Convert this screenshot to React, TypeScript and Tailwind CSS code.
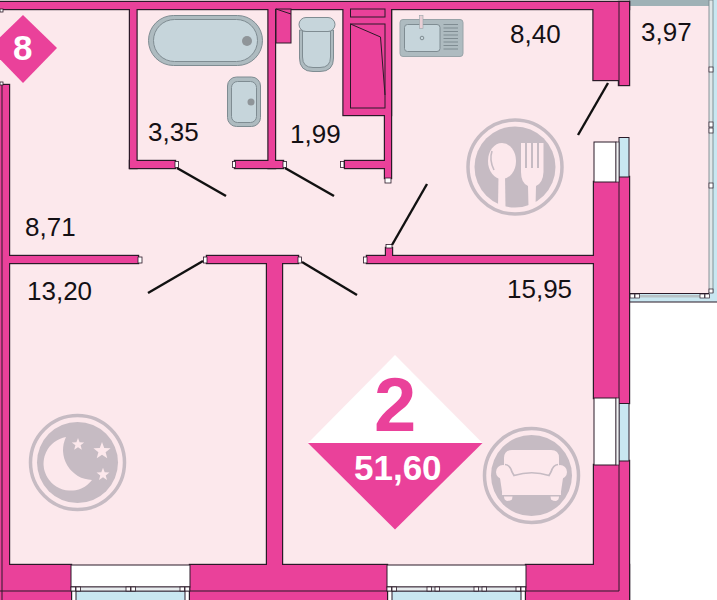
import React from 'react';

const PINK = '#ea419a';
const FLOOR = '#fce8ec';
const LINE = '#2b1a28';
const ICON = '#c6bbc3';
const GLASS = '#c9e7f1';

// x, y, w, h of every wall piece, outlined together so that joins have no seams
const walls: number[][] = [
  [0, 2, 629, 7],
  [0, 85, 9, 515],
  [130, 9, 6.5, 159],
  [130, 161, 45, 7],
  [268.5, 9, 6.5, 159],
  [235, 161, 48, 7],
  [345, 161, 40, 7],
  [385, 9, 6, 169],
  [343.5, 9, 47.5, 106],
  [593.5, 9, 25.5, 71],
  [619, 2, 10, 83],
  [9, 256, 129, 7],
  [207, 256, 91, 7],
  [267, 263, 15, 302],
  [367, 256, 227, 7],
  [386, 248, 6, 8],
  [594, 182, 25, 216],
  [619, 177, 10, 226],
  [594, 465, 25, 100],
  [619, 461, 10, 139],
  [0, 565, 71, 35],
  [190, 565, 197, 35],
  [526, 565, 103, 35],
];

const jambs: number[][] = [
  [0, 9, 3, 3],
  [0, 82, 3, 3],
  [175, 161.5, 3.5, 6],
  [232.5, 161.5, 3, 6],
  [283, 161.5, 3.5, 6],
  [340.5, 161.5, 3.5, 6],
  [385, 178, 6, 5],
  [138, 257, 4, 6],
  [203.5, 257, 3.5, 6],
  [298, 257, 3.5, 6],
  [363.5, 257, 3.5, 6],
  [386, 244.5, 6, 3.5],
];

const doors: number[][] = [
  [177, 168, 226, 196],
  [285, 168, 334, 196],
  [392, 245, 427, 184],
  [608, 83, 578, 135],
  [203, 261, 148, 293],
  [302, 262, 357, 295],
];

function star(cx: number, cy: number, r: number) {
  const pts: string[] = [];
  for (let i = 0; i < 10; i++) {
    const rad = i % 2 === 0 ? r : r * 0.42;
    const a = (Math.PI / 5) * i - Math.PI / 2;
    pts.push(`${cx + rad * Math.cos(a)},${cy + rad * Math.sin(a)}`);
  }
  return pts.join(' ');
}

function Badge({ cx, cy, children }: { cx: number; cy: number; children?: React.ReactNode }) {
  return (
    <g>
      <circle cx={cx} cy={cy} r={47} fill="none" stroke={ICON} strokeWidth={3.5} />
      <circle cx={cx} cy={cy} r={40.5} fill={ICON} />
      {children}
    </g>
  );
}

function Walls() {
  return (
    <g>
      {walls.map((w, i) => (
        <rect key={i} x={w[0]} y={w[1]} width={w[2]} height={w[3]} fill="none" stroke={LINE} strokeWidth={2.4} />
      ))}
      {walls.map((w, i) => (
        <rect key={i} x={w[0]} y={w[1]} width={w[2]} height={w[3]} fill={PINK} />
      ))}
      <path d="M2 85V600M0 591H71M190 591H387M526 591H619M619 2V85M619 177V591" fill="none" stroke={LINE} strokeWidth={1} />
      {jambs.map((j, i) => (
        <rect key={i} x={j[0]} y={j[1]} width={j[2]} height={j[3]} fill="#fff" stroke={LINE} strokeWidth={0.8} />
      ))}
      {doors.map((d, i) => (
        <line key={i} x1={d[0]} y1={d[1]} x2={d[2]} y2={d[3]} stroke="#111" strokeWidth={2.4} />
      ))}
    </g>
  );
}

function Shaft() {
  return (
    <g fill="none" stroke={LINE} strokeWidth={1}>
      <rect x={350.5} y={9} width={34.5} height={8} />
      <rect x={350.5} y={24} width={34.5} height={84} />
      <path d="M350.5 24L380.5 37L385 95" />
      <rect x={276} y={9} width={15} height={34} fill={PINK} />
      <path d="M276 9L291 14" />
    </g>
  );
}

function Fixtures() {
  const grey = '#aebbc0';
  const water = '#c6d5db';
  const edge = '#7f8c92';
  return (
    <g strokeWidth={1}>
      <rect x={148.5} y={15.5} width={114} height={50} rx={25} fill={grey} stroke={edge} />
      <rect x={153.5} y={19.5} width={104} height={42} rx={21} fill={water} stroke={edge} />
      <circle cx={247} cy={41} r={5} fill="#8f9599" />
      <rect x={227.5} y={77} width={33} height={49.5} rx={9} fill={grey} stroke={edge} />
      <rect x={231.5} y={81.5} width={25} height={41} rx={6} fill={water} stroke={edge} />
      <circle cx={251} cy={102} r={3.5} fill="#8f9599" />
      <path d="M299.5 30H333.5V58Q333.5 71.5 320 71.5H313Q299.5 71.5 299.5 58Z" fill={grey} stroke={edge} />
      <path d="M302.5 31H330.5V57Q330.5 67.5 320 67.5H313Q302.5 67.5 302.5 57Z" fill={water} stroke={edge} />
      <rect x={299} y={17.5} width={36} height={14} rx={7} fill={water} stroke={edge} />
      <rect x={400} y={19.5} width={63} height={37} rx={3} fill={grey} stroke="#98a3a8" />
      <rect x={404.5} y={24.5} width={35.5} height={27} rx={3} fill={water} stroke={edge} />
      <rect x={419.5} y={15.5} width={3.5} height={13} fill="#e9cfd6" stroke="#98a3a8" strokeWidth={0.6} />
      <circle cx={422} cy={38} r={1.8} fill="none" stroke={edge} />
      <path d="M443.5 24.5H458M443.5 28H458M443.5 31.5H458M443.5 35H458M443.5 38.5H458M443.5 42H458M443.5 45.5H458M443.5 49H458" stroke={edge} />
    </g>
  );
}

function Windows() {
  const frame = (x: number, y: number, w: number, h: number, key: string) => (
    <rect key={key} x={x} y={y} width={w} height={h} fill="#fff" stroke={LINE} strokeWidth={0.8} />
  );
  return (
    <g>
      {/* right wall */}
      <rect x={594} y={142} width={22} height={40} fill="#fff" stroke={LINE} />
      <rect x={619} y={137.5} width={10} height={39.5} fill={GLASS} stroke={LINE} />
      <rect x={616} y={142} width={3} height={40} fill="#eef2f3" stroke={LINE} strokeWidth={0.7} />
      <rect x={594} y={398} width={22} height={67} fill="#fff" stroke={LINE} />
      <rect x={619} y={403.5} width={10} height={57.5} fill={GLASS} stroke={LINE} />
      <rect x={616} y={398} width={3} height={67} fill="#eef2f3" stroke={LINE} strokeWidth={0.7} />
      {/* bottom wall */}
      <rect x={71} y={565} width={119} height={22} fill="#fff" stroke={LINE} />
      <rect x={76} y={591} width={109} height={10} fill={GLASS} stroke={LINE} />
      <rect x={71} y={587} width={119} height={4} fill="#e7ecee" stroke={LINE} strokeWidth={0.8} />
      {[71, 76, 126, 131, 180, 185].map((x) => frame(x, 587, 4.5, 4, `a${x}`))}
      <rect x={387} y={565} width={139} height={22} fill="#fff" stroke={LINE} />
      <rect x={392} y={591} width={129} height={10} fill={GLASS} stroke={LINE} />
      <rect x={387} y={587} width={139} height={4} fill="#e7ecee" stroke={LINE} strokeWidth={0.8} />
      {[387, 392, 427, 435, 474, 482, 516, 521].map((x) => frame(x, 587, 4.5, 4, `b${x}`))}
    </g>
  );
}

function Balcony() {
  const edge = '#6f7f86';
  return (
    <g>
      <rect x={629} y={6} width={81} height={287} fill={FLOOR} />
      <rect x={629} y={0} width={81} height={6} fill="#9fb1b6" />
      <rect x={713} y={0} width={4} height={302} fill={GLASS} />
      <rect x={709} y={0} width={4} height={293} fill="#dfe6e8" stroke={edge} strokeWidth={0.8} />
      {[67, 122, 128, 183].map((y) => (
        <rect key={y} x={709} y={y} width={4} height={5} fill="#fff" stroke={LINE} strokeWidth={0.7} />
      ))}
      <rect x={629} y={293} width={88} height={9} fill={GLASS} />
      <path d="M629 293.5H709M629 302H717" stroke={LINE} strokeWidth={1} />
      <rect x={640} y={295} width={60} height={2.5} fill="#b8c2c6" />
      {[630, 635, 700, 705].map((x) => (
        <rect key={x} x={x} y={294} width={4.5} height={4} fill="#fff" stroke={LINE} strokeWidth={0.7} />
      ))}
      <rect x={709} y={289} width={4} height={4} fill="#fff" stroke={LINE} strokeWidth={0.7} />
    </g>
  );
}

function DiningIcon() {
  return (
    <Badge cx={515} cy={167}>
      <ellipse cx={502} cy={161} rx={14} ry={18} fill={FLOOR} />
      <path d="M498.5 176H505L505.5 207H498Z" fill={FLOOR} />
      <path d="M492 151Q489 160 494 170" fill="none" stroke={ICON} strokeWidth={1.6} />
      <path d="M521 143H525V168H527V143H531V168H533V143H537V168H539V143H543.5V172Q543 183 536 186L535.5 207H528.5L528 186Q521 183 521 172Z" fill={FLOOR} />
    </Badge>
  );
}

function SleepIcon() {
  return (
    <Badge cx={77.5} cy={462.5}>
      <path d="M66 437A27 27 0 1 0 92 480A30 30 0 0 1 66 437Z" fill={FLOOR} />
      <polygon points={star(78, 444.5, 6.5)} fill={FLOOR} />
      <polygon points={star(102, 451, 9)} fill={FLOOR} />
      <polygon points={star(103, 474.5, 6.8)} fill={FLOOR} />
    </Badge>
  );
}

function SofaIcon() {
  return (
    <Badge cx={531.5} cy={475.5}>
      <path d="M504 470V458Q504 450 512 450H551Q559 450 559 458V470L561 495H502Z" fill={FLOOR} />
      <circle cx={503} cy={472} r={7} fill={FLOOR} />
      <circle cx={560} cy={472} r={7} fill={FLOOR} />
      <path d="M500 478L502.5 495H560.5L563 478Z" fill={FLOOR} />
      <path d="M505 464.5Q510 465 512 472L514 475.5Q532 470 549 475.5L551 472Q553 465 558 464.5" fill="none" stroke={ICON} strokeWidth={1.7} />
      <path d="M504 496.5H512.5L512 499.5Q510 501 507 501Q504 500 504 496.5ZM550.5 496.5H559Q559 500 556 501Q553 501 551 499.5Z" fill={FLOOR} />
    </Badge>
  );
}

function Diamonds() {
  return (
    <g>
      <polygon points="23,15 57,48 23,83 -11,48" fill={PINK} />
      <polygon points="395,355 482.5,443 308,443" fill="#fff" />
      <polygon points="308,443 482.5,443 395,529.5" fill={PINK} />
    </g>
  );
}

export default function App() {
  return (
    <div className="relative w-[717px] h-[600px] overflow-hidden bg-white font-['Liberation_Sans',Arial,sans-serif] text-[26px] leading-none text-[#141014]">
      <svg className="absolute left-0 top-0" width={717} height={600} viewBox="0 0 717 600">
        <rect x={0} y={0} width={629} height={570} fill={FLOOR} />
        <Balcony />
        <Fixtures />
        <DiningIcon />
        <SleepIcon />
        <SofaIcon />
        <Walls />
        <Shaft />
        <Windows />
        <Diamonds />
      </svg>

      <span className="absolute left-[148px] top-[119px]">3,35</span>
      <span className="absolute left-[290px] top-[121px]">1,99</span>
      <span className="absolute left-[510px] top-[21px]">8,40</span>
      <span className="absolute left-[641px] top-[19px]">3,97</span>
      <span className="absolute left-[25px] top-[214px]">8,71</span>
      <span className="absolute left-[27px] top-[278px]">13,20</span>
      <span className="absolute left-[507px] top-[276px]">15,95</span>

      <span className="absolute left-[13px] top-[30px] text-[35px] font-bold text-white">8</span>
      <span className="absolute left-[374px] top-[367px] text-[76px] font-bold text-[#ea419a]">2</span>
      <span className="absolute left-[354px] top-[450px] text-[35px] font-bold text-white">51,60</span>
    </div>
  );
}
